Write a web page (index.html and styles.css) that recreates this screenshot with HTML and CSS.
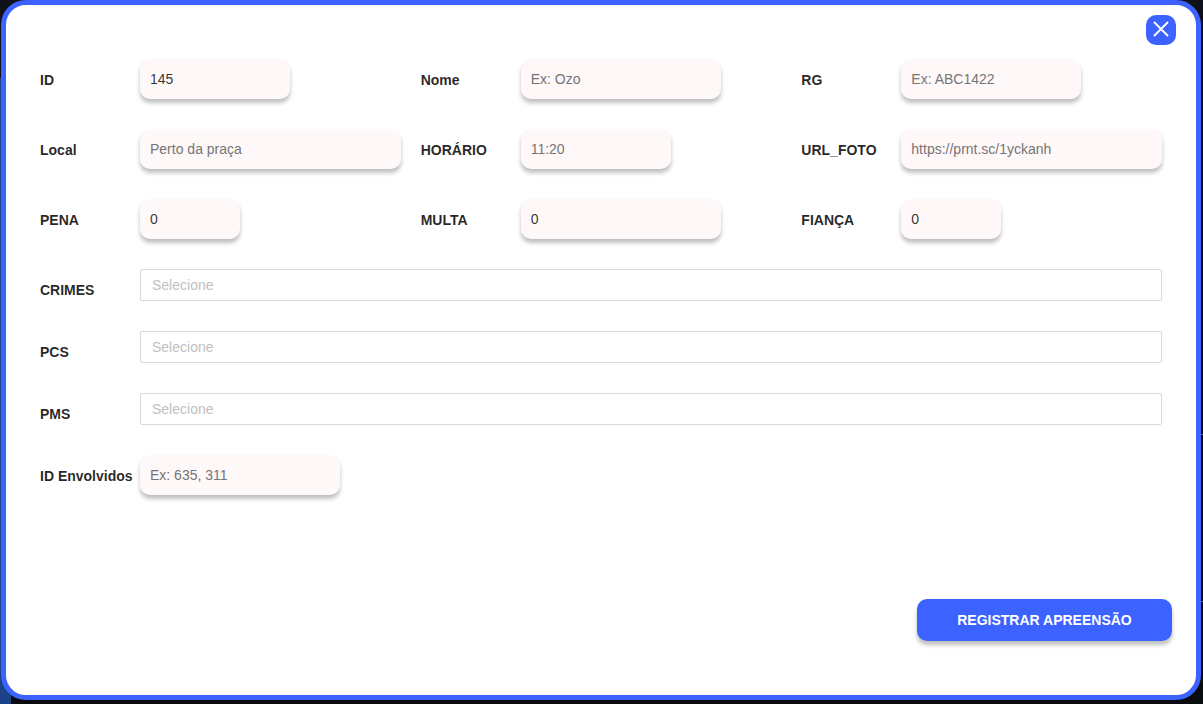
FILE: index.html
```html
<!DOCTYPE html>
<html lang="pt-BR">
<head>
<meta charset="utf-8">
<title>Registrar apreensão</title>
<link rel="stylesheet" href="styles.css">
</head>
<body>
<div class="backdrop"></div>
<main class="modal">
  <button class="close" type="button" aria-label="Fechar">
    <svg width="16" height="16" viewBox="0 0 16 16" fill="none" stroke="#fff" stroke-width="1.9" stroke-linecap="round"><path d="M1.5 1.5 14.5 14.5M14.5 1.5 1.5 14.5"/></svg>
  </button>
  <form class="form">
    <div class="columns">
      <div class="field"><label class="label">ID</label><input class="input w150" value="145"></div>
      <div class="field"><label class="label">Nome</label><input class="input w200" placeholder="Ex: Ozo"></div>
      <div class="field"><label class="label">RG</label><input class="input w180" placeholder="Ex: ABC1422"></div>
      <div class="field"><label class="label">Local</label><input class="input full" placeholder="Perto da praça"></div>
      <div class="field"><label class="label">HORÁRIO</label><input class="input w150" placeholder="11:20"></div>
      <div class="field"><label class="label">URL_FOTO</label><input class="input full" placeholder="https://prnt.sc/1yckanh"></div>
      <div class="field"><label class="label">PENA</label><input class="input w100" value="0"></div>
      <div class="field"><label class="label">MULTA</label><input class="input w200" value="0"></div>
      <div class="field"><label class="label">FIANÇA</label><input class="input w100" value="0"></div>
    </div>
    <div class="field"><label class="label">CRIMES</label><div class="select">Selecione</div></div>
    <div class="field"><label class="label">PCS</label><div class="select">Selecione</div></div>
    <div class="field"><label class="label">PMS</label><div class="select">Selecione</div></div>
    <div class="field"><label class="label">ID Envolvidos</label><input class="input w200" placeholder="Ex: 635, 311"></div>
  </form>
  <button class="submit" type="button">REGISTRAR APREENSÃO</button>
</main>
</body>
</html>
```
FILE: styles.css
```css
* {
  box-sizing: border-box;
}

body {
  margin: 0;
  height: 704px;
  overflow: hidden;
  background: #0b0b12;
  font-family: "Liberation Sans", Arial, sans-serif;
  font-size: 14px;
}

.backdrop {
  position: absolute;
  inset: 0;
  background:
    linear-gradient(#1b4186, #1b4186) 0 78px / 11px 626px no-repeat,
    linear-gradient(#66666b, #66666b) 100% 434px / 3px 1px no-repeat,
    linear-gradient(#66666b, #66666b) 100% 601px / 3px 1px no-repeat,
    linear-gradient(#11111c, #0b0b12 30%, #0a0b0f);
}

.modal {
  position: relative;
  display: flex;
  flex-direction: column;
  width: 1200px;
  height: 700px;
  margin-left: 1px;
  padding: 10px 14px 54px 34px;
  border: 5px solid #3c62ff;
  border-radius: 25px;
  background: #fff;
}

.close {
  display: flex;
  align-self: flex-end;
  align-items: center;
  justify-content: center;
  width: 30px;
  height: 30px;
  margin-right: 6px;
  padding: 0 0 2px;
  border: 0;
  border-radius: 10px;
  background: #3c62ff;
}

.form {
  display: flex;
  flex-direction: column;
  gap: 30px;
  margin-top: 14px;
}

.columns {
  display: grid;
  grid-template-columns: repeat(3, 1fr);
  row-gap: 30px;
}

.field {
  display: flex;
  align-items: flex-start;
  padding-right: 20px;
}

.label {
  flex: 0 0 100px;
  padding-top: 11px;
  color: rgba(0, 0, 0, 0.85);
  font-weight: 700;
  line-height: 20px;
  white-space: nowrap;
}

.input {
  min-width: 0;
  height: 40px;
  padding: 0 10px;
  border: 0;
  border-radius: 10px;
  background: #fff8f8;
  box-shadow: 0 4px 4px rgba(0, 0, 0, 0.25);
  color: rgba(0, 0, 0, 0.8);
  font: inherit;
}

.input::placeholder {
  color: #757575;
}

.w100 { width: 100px; }
.w150 { width: 150px; }
.w180 { width: 180px; }
.w200 { width: 200px; }
.full { flex: 1; }

.select {
  flex: 1;
  height: 32px;
  padding: 0 11px;
  border: 1px solid #d9d9d9;
  border-radius: 2px;
  color: #bfbfbf;
  line-height: 30px;
}

.submit {
  align-self: flex-end;
  width: 255px;
  height: 42px;
  margin: auto 10px 0 0;
  padding: 0;
  border: 0;
  border-radius: 10px;
  background: #3c62ff;
  box-shadow: 0 4px 4px rgba(0, 0, 0, 0.25);
  color: #fff;
  font: 700 14px "Liberation Sans", Arial, sans-serif;
}
```
